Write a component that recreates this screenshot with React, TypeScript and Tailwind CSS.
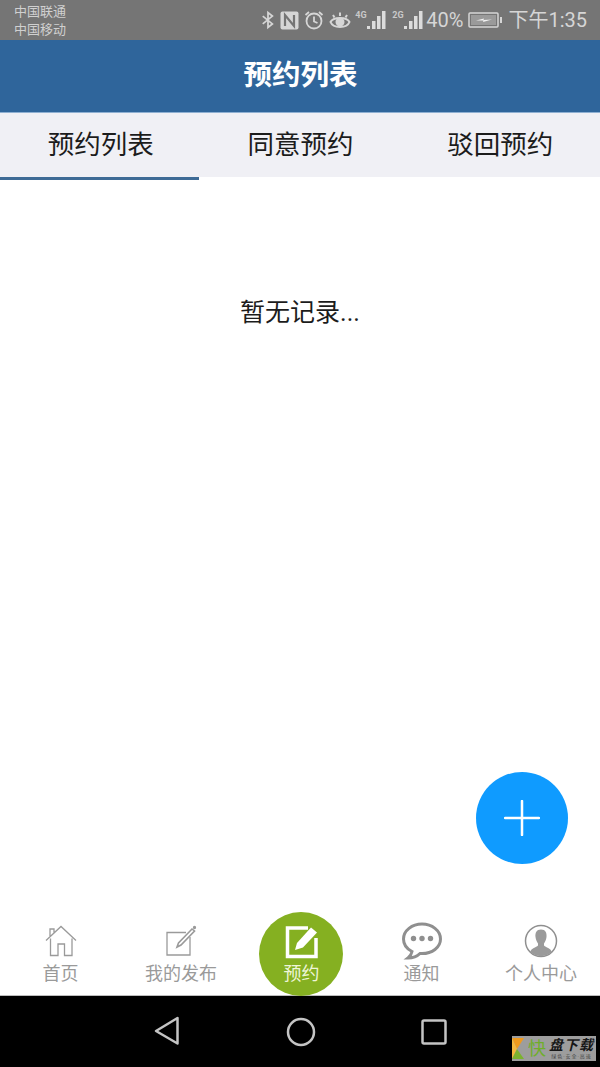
const cjk = "font-['Roboto','Noto_Sans_CJK_SC',sans-serif]";

function SignalBars({ label }: { label: string }) {
  return (
    <div className="relative h-[22px] w-[32px]">
      <span className="absolute left-0 top-[1px] text-[9px] font-bold leading-[10px] text-[#c9c9c9]">{label}</span>
      <svg className="absolute inset-0" width="32" height="22" viewBox="0 0 32 22" fill="#dcdcdc">
        <rect x="12" y="17" width="3" height="3" />
        <rect x="17" y="12" width="3.500" height="8" />
        <rect x="22" y="7" width="3.500" height="13" />
        <rect x="27" y="2" width="3.500" height="18" />
      </svg>
    </div>
  );
}

function StatusBar() {
  return (
    <div className="flex h-10 shrink-0 items-center justify-between bg-[#757575] pl-[14px] pr-[13px]">
      <div className="mt-[1px] flex flex-col gap-[2px] text-[13px] leading-[16px] text-[#d0d0d0]">
        <span>中国联通</span>
        <span>中国移动</span>
      </div>
      <div className="flex items-center text-[#d6d6d6]">
        <svg width="14" height="20" viewBox="0 0 16 20" fill="none" stroke="#d6d6d6" strokeWidth="2" className="mr-[5px]">
          <path d="M2 5.500 13 14.500 8 18.500V1.500L13 5.500 2 14.500" />
        </svg>
        <svg width="19" height="19" viewBox="0 0 19 19" className="mr-[5px]">
          <rect x="0.500" y="0.500" width="18" height="18" rx="2" fill="#d6d6d6" />
          <path d="M5 15V4L14 15V4" fill="none" stroke="#757575" strokeWidth="2.200" />
        </svg>
        <svg width="20" height="20" viewBox="0 0 20 20" fill="none" stroke="#d6d6d6" strokeWidth="1.800" className="mr-[5px]">
          <circle cx="10" cy="11" r="7.500" />
          <path d="M10 6.500V11.500L13.500 13M1.500 5 5 2M18.500 5 15 2" />
        </svg>
        <svg width="22" height="20" viewBox="0 0 22 20" fill="none" stroke="#d6d6d6" strokeWidth="2" className="mr-[4px]">
          <path d="M1.500 12C4 6.500 18 6.500 20.500 12 18 18.500 4 18.500 1.500 12Z" />
          <circle cx="11" cy="12" r="3.500" fill="#d6d6d6" />
          <path d="M4 5 5.500 7.500M11 2.500V6M18 5 16.500 7.500" />
        </svg>
        <SignalBars label="4G" />
        <div className="w-[5px]" />
        <SignalBars label="2G" />
        <span className={`ml-[2px] text-[20px] leading-none ${cjk}`}>40%</span>
        <svg width="35" height="18" viewBox="0 0 35 18" className="ml-[5px]">
          <rect x="1" y="2" width="29" height="14" rx="1" fill="none" stroke="#d6d6d6" strokeWidth="1.500" />
          <rect x="3" y="4" width="25" height="10" fill="#9a9a9a" />
          <rect x="32" y="6" width="2" height="6" fill="#d6d6d6" />
          <path d="M8 9.500 16 7.500 15.500 9 24 8.500 15 11 15.500 9.500Z" fill="#f2f2f2" />
        </svg>
        <span className={`ml-[5px] text-[20px] leading-none ${cjk}`}>下午1:35</span>
      </div>
    </div>
  );
}

function TabItem({ label }: { label: string }) {
  return <div className="flex flex-1 items-center justify-center text-[26.500px] text-[#1c1c1c]">{label}</div>;
}

function NavItem({ label, className, children }: { label: string; className?: string; children: React.ReactNode }) {
  return (
    <div className={`flex flex-col items-center ${className ?? "w-[120px]"}`}>
      <div className="flex h-[38px] items-center justify-center">{children}</div>
      <span className="mt-[2px] text-[18px] leading-[24px] text-[#9a9a9a]">{label}</span>
    </div>
  );
}

export default function App() {
  return (
    <div className={`relative flex h-[1067px] w-[600px] flex-col overflow-hidden bg-white ${cjk}`}>
      <StatusBar />

      <header className="flex h-[73px] shrink-0 items-center justify-center border-b border-[#8fb0d2] bg-[#2f659b] pl-[1px] text-[28.500px] font-bold text-white">
        预约列表
      </header>

      <nav className="flex h-[64px] shrink-0 bg-[#f0f0f5] pl-[1px]">
        <TabItem label="预约列表" />
        <TabItem label="同意预约" />
        <TabItem label="驳回预约" />
      </nav>
      <div className="h-[3px] w-[199px] shrink-0 bg-[#3e6b96]" />

      <main className="relative flex-1">
        <p className="pt-[113px] text-center text-[25px] leading-[40px] text-[#1c1c1c]">暂无记录...</p>
        {/* floating add button */}
        <button className="absolute right-[32px] top-[592px] flex h-[92px] w-[92px] items-center justify-center rounded-full bg-[#0f9bff]">
          <svg width="36" height="36" viewBox="0 0 36 36" stroke="white" strokeWidth="2.500" strokeLinecap="round">
            <path d="M18 1V35M1 18H35" />
          </svg>
        </button>
      </main>

      {/* bottom tabs */}
      <div className="relative flex h-[71px] shrink-0 items-start pt-[2px]">
        <div className="mt-[-4px] flex w-full">
          <NavItem label="首页" className="w-[121px]">
            <svg width="32" height="32" viewBox="0 0 32 32" fill="none" stroke="#9a9a9a" strokeWidth="1.300">
              <path d="M1 15.500 16 1.500 31 15.500M5 11V4H9V7.500M5.500 13.500V30.500H13V19H19.500V30.500H27V13.500" />
            </svg>
          </NavItem>
          <NavItem label="我的发布">
            <svg width="32" height="32" viewBox="0 0 32 32" fill="none" stroke="#9a9a9a" strokeWidth="1.300">
              <path d="M21 7.500H2V30H25V12" />
              <path d="M12 22 13.500 18 27 4 29.500 6 16 20Z" strokeWidth="1.600" />
              <circle cx="29.500" cy="2.500" r="1" fill="#9a9a9a" />
            </svg>
          </NavItem>
          <div className="w-[120px]" />
          <NavItem label="通知" className="w-[120px] pl-[1px]">
            <svg width="40" height="38" viewBox="0 0 40 38" fill="none">
              <path d="M20 2C10 2 1.500 8.500 1.500 17 1.500 22.500 5 27 10 29.500 9.500 32 8 34.500 6 36 11 36 15.500 34 18 31.500 18.700 31.600 19.300 31.600 20 31.600 30 31.600 38.500 25.500 38.500 17 38.500 8.500 30 2 20 2Z" stroke="#8f8f8f" strokeWidth="3" />
              <circle cx="11.500" cy="16.500" r="2.700" fill="#8f8f8f" />
              <circle cx="20" cy="16.500" r="2.700" fill="#8f8f8f" />
              <circle cx="28.500" cy="16.500" r="2.700" fill="#8f8f8f" />
            </svg>
          </NavItem>
          <NavItem label="个人中心" className="w-[119px] pl-[1px]">
            <svg width="34" height="34" viewBox="0 0 34 34" fill="none">
              <circle cx="17" cy="17" r="15.500" stroke="#8f8f8f" strokeWidth="1.500" />
              <path d="M17 5.500C12.500 5.500 11 9 11.500 13 11.800 16 13 18 14 19.500V21.500C12 23.500 7.500 24 6 28 12 33.500 22 33.500 28 28 26.500 24 22 23.500 20 21.500V19.500C21 18 22.200 16 22.500 13 23 9 21.500 5.500 17 5.500Z" fill="#9a9a9a" />
            </svg>
          </NavItem>
        </div>
        {/* raised center button */}
        <div className="absolute left-[259px] top-[-12px] flex h-[84px] w-[84px] flex-col items-center rounded-full bg-[#85b021] pl-[1px] pt-[13px]">
          <svg width="34" height="34" viewBox="0 0 34 34" fill="none">
            <path d="M23 3H2.500V31.500H31V13" stroke="white" strokeWidth="3.500" />
            <path d="M10 25 12 18 26 2.500 32 7.500 18 22.500Z" fill="white" />
          </svg>
          <span className="mt-[2px] text-[18px] leading-[26px] text-[#eef5d8]">预约</span>
        </div>
      </div>

      {/* system nav */}
      <div className="flex h-[72px] shrink-0 items-center justify-center border-t border-[#bdbdbd] bg-black">
        <svg width="26" height="30" viewBox="0 0 26 30" fill="none" stroke="#c4c4c4" strokeWidth="2.500" strokeLinejoin="round" className="mb-[2px]">
          <path d="M23.500 2V27.500L2 15Z" />
        </svg>
        <svg width="30" height="30" viewBox="0 0 30 30" fill="none" stroke="#c4c4c4" strokeWidth="2.500" className="ml-[106px] mr-[105px]">
          <circle cx="15" cy="15" r="13" />
        </svg>
        <svg width="26" height="26" viewBox="0 0 26 26" fill="none" stroke="#c4c4c4" strokeWidth="2.500" strokeLinejoin="round">
          <rect x="1.500" y="1.500" width="23" height="23" rx="1.500" />
        </svg>
      </div>

      {/* watermark badge */}
      <div className="absolute left-[512px] top-[1036px] flex h-[25px] w-[84px] items-center bg-[#9d9d9d]">
        <svg width="13" height="25" viewBox="0 0 13 25" className="shrink-0">
          <path d="M0 2H12L5 13Z" fill="#ef9a1e" />
          <path d="M0 2 5 13 0 23Z" fill="#f5b83d" />
          <path d="M0 23 5 13 12 23Z" fill="#7bb32e" />
        </svg>
        <span className="ml-[3px] text-[18px] leading-none text-[#6fae2a]">快</span>
        <div className="ml-[3px] flex flex-col items-center">
          <span className="text-[14px] font-bold italic leading-[15px] tracking-[1px] text-[#161616]">盘下载</span>
          <span className="text-[5px] leading-[6px] tracking-[1px] text-[#444444]">绿色·安全·高速</span>
        </div>
      </div>
    </div>
  );
}
